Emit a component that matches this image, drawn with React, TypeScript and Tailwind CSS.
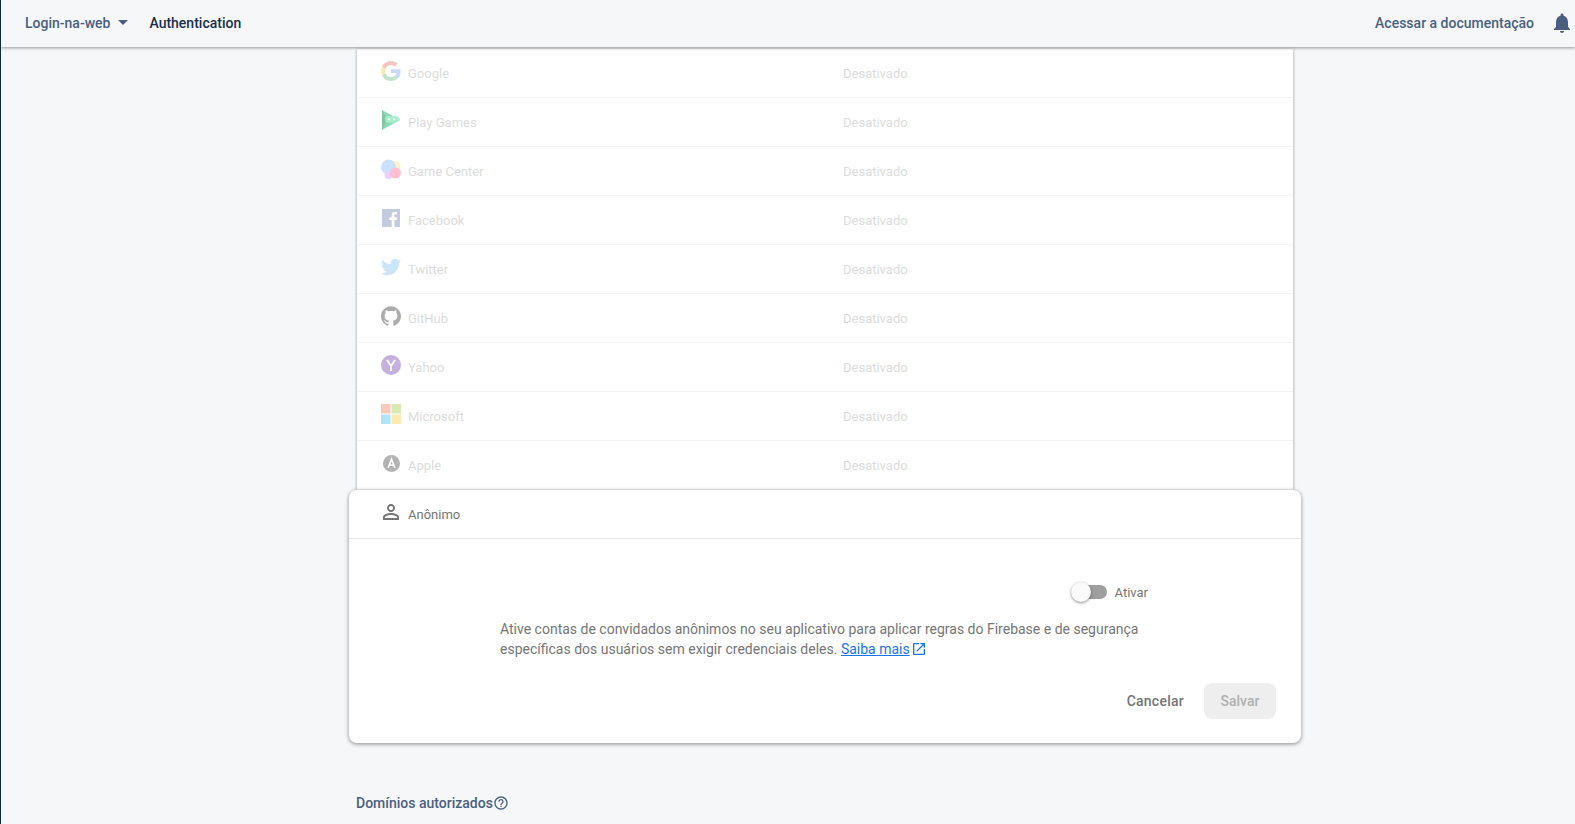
import type { ReactNode } from 'react'
import { SiGithub } from 'react-icons/si'

const font = { fontFamily: 'Roboto, sans-serif' }

function GoogleIcon() {
  return (
    <svg viewBox="0 0 48 48" className="h-5 w-5">
      <path fill="#EA4335" d="M24 9.5c3.54 0 6.71 1.22 9.21 3.6l6.85-6.85C35.9 2.38 30.47 0 24 0 14.62 0 6.51 5.38 2.56 13.22l7.98 6.19C12.43 13.72 17.74 9.5 24 9.5z" />
      <path fill="#4285F4" d="M46.98 24.55c0-1.57-.15-3.09-.38-4.55H24v9.02h12.94c-.58 2.96-2.26 5.48-4.78 7.18l7.73 6c4.51-4.18 7.09-10.36 7.09-17.65z" />
      <path fill="#FBBC05" d="M10.53 28.59c-.5-1.45-.78-2.99-.78-4.59s.27-3.14.78-4.59l-7.98-6.19C.92 16.46 0 20.12 0 24c0 3.88.92 7.54 2.56 10.78l7.97-6.19z" />
      <path fill="#34A853" d="M24 48c6.48 0 11.93-2.13 15.89-5.81l-7.73-6c-2.15 1.45-4.92 2.3-8.16 2.3-6.26 0-11.57-4.22-13.47-9.91l-7.98 6.19C6.51 42.62 14.62 48 24 48z" />
    </svg>
  )
}

function PlayIcon() {
  return (
    <svg viewBox="0 0 20 20" className="h-5 w-5">
      <path fill="#20b46a" d="M1 0l18 10L1 20z" />
      <path fill="#0f8f4f" d="M1 0l3 5.5v9L1 20z" />
      <path fill="#4fdc9a" d="M6.5 6h7c2.5 0 5 2 5.5 4l-6.5 3.6c-.8-.6-1-.9-1.6-.9H7.6C5.8 12.7 4.5 11.2 4.5 9 4.5 7.3 5.2 6 6.5 6z" />
      <circle cx="7.8" cy="9.2" r="1" fill="#fff" />
      <circle cx="13" cy="9.2" r="1" fill="#fff" />
    </svg>
  )
}

function GameCenterIcon() {
  return (
    <svg viewBox="0 0 20 20" className="h-5 w-5">
      <circle cx="14" cy="7" r="5.5" fill="#ffe36b" />
      <circle cx="7.5" cy="8" r="7.5" fill="#7db5ff" />
      <circle cx="7.5" cy="16" r="4" fill="#c58cf5" />
      <circle cx="14.5" cy="14" r="5.5" fill="#ff5f8f" />
    </svg>
  )
}

function FacebookIcon() {
  return (
    <svg viewBox="0 0 18 18" className="h-[18px] w-[18px]">
      <rect width="18" height="18" fill="#3b5998" />
      <path fill="#fff" d="M12.4 18v-7h2.3l.4-2.7h-2.7V6.6c0-.8.2-1.3 1.3-1.3h1.4V2.9c-.3 0-1.1-.1-2-.1-2 0-3.4 1.2-3.4 3.5v2H7.4V11h2.3v7z" />
    </svg>
  )
}

function TwitterIcon() {
  return (
    <svg viewBox="0 0 24 24" className="h-5 w-5">
      <path fill="#55acee" d="M23.953 4.57a10 10 0 01-2.825.775 4.958 4.958 0 002.163-2.723c-.951.555-2.005.959-3.127 1.184a4.92 4.92 0 00-8.384 4.482C7.69 8.095 4.067 6.13 1.64 3.162a4.822 4.822 0 00-.666 2.475c0 1.71.87 3.213 2.188 4.096a4.904 4.904 0 01-2.228-.616v.06a4.923 4.923 0 003.946 4.827 4.996 4.996 0 01-2.212.085 4.936 4.936 0 004.604 3.417 9.867 9.867 0 01-6.102 2.105c-.39 0-.779-.023-1.17-.067a13.995 13.995 0 007.557 2.209c9.053 0 13.998-7.496 13.998-13.985 0-.21 0-.42-.015-.63A9.935 9.935 0 0024 4.59z" />
    </svg>
  )
}

function YahooIcon() {
  return (
    <svg viewBox="0 0 20 20" className="h-5 w-5">
      <circle cx="10" cy="10" r="10" fill="#5f1fa8" />
      <path stroke="#fff" strokeWidth="2" fill="none" d="M6 5l4 6 4-6M10 11v5" />
    </svg>
  )
}

function MicrosoftIcon() {
  return (
    <svg viewBox="0 0 20 20" className="h-5 w-5">
      <rect width="9.5" height="9.5" fill="#f25022" />
      <rect x="10.5" width="9.5" height="9.5" fill="#7fba00" />
      <rect y="10.5" width="9.5" height="9.5" fill="#00a4ef" />
      <rect x="10.5" y="10.5" width="9.5" height="9.5" fill="#ffb900" />
    </svg>
  )
}

function AppleIcon() {
  return (
    <svg viewBox="0 0 18 18" className="h-[17px] w-[17px]">
      <circle cx="9" cy="9" r="9" fill="#444" />
      <path stroke="#fff" strokeWidth="1.8" fill="none" d="M5.5 13.5L9 4.5l3.5 9M6.7 10.8h4.6" />
    </svg>
  )
}

const providers: { name: string; icon: ReactNode; iconClass: string }[] = [
  { name: 'Google', icon: <GoogleIcon />, iconClass: 'opacity-30' },
  { name: 'Play Games', icon: <PlayIcon />, iconClass: 'opacity-50' },
  { name: 'Game Center', icon: <GameCenterIcon />, iconClass: 'opacity-40' },
  { name: 'Facebook', icon: <FacebookIcon />, iconClass: 'opacity-30' },
  { name: 'Twitter', icon: <TwitterIcon />, iconClass: 'opacity-30' },
  { name: 'GitHub', icon: <SiGithub className="h-5 w-5 text-[#333]" />, iconClass: 'opacity-40' },
  { name: 'Yahoo', icon: <YahooIcon />, iconClass: 'opacity-35' },
  { name: 'Microsoft', icon: <MicrosoftIcon />, iconClass: 'opacity-30' },
  { name: 'Apple', icon: <AppleIcon />, iconClass: 'opacity-40' },
]

function ProviderRow({ name, icon, iconClass }: { name: string; icon: ReactNode; iconClass: string }) {
  return (
    <div className="flex h-[49px] items-center border-b border-[#f3f3f3] pl-[24px] text-[13px] text-[#dcdcdc]">
      <div className={`mb-1 flex h-5 w-5 items-center justify-center ${iconClass}`}>{icon}</div>
      <span className="ml-[7px] w-[435px] pt-[2px]">{name}</span>
      <span className="pt-[2px]">Desativado</span>
    </div>
  )
}

export default function App() {
  return (
    <div className="flex h-[824px] flex-col overflow-hidden border-l border-[#12263f] bg-[#f6f7f9]" style={font}>
      <header className="relative z-10 flex h-[47px] shrink-0 items-center bg-[#f6f7f9] pb-0.5 pl-6 pr-px text-sm font-medium shadow-[0_1px_3px_rgba(0,0,0,0.4)]">
        <span className="text-[#4a5f80]">Login-na-web</span>
        <svg viewBox="0 0 10 5" className="ml-2 h-[5px] w-[10px]">
          <path fill="#4a5f80" d="M0 0h10L5 5z" />
        </svg>
        <span className="ml-[21px] text-[#1a2f4a]">Authentication</span>
        <span className="ml-auto text-[#4a5f80]">Acessar a documentação</span>
        <svg viewBox="0 0 24 24" className="ml-4 h-6 w-6">
          <path fill="#4a5f80" d="M12 22c1.1 0 2-.9 2-2h-4c0 1.1.89 2 2 2zm6-6v-5c0-3.07-1.64-5.64-4.5-6.32V4c0-.83-.67-1.5-1.5-1.5s-1.5.67-1.5 1.5v.68C7.63 5.36 6 7.92 6 11v5l-2 2v1h16v-1l-2-2z" />
        </svg>
      </header>

      <main className="ml-[356px] w-[936px]">
        <section className="mt-[2px] bg-white shadow-[0_1px_3px_rgba(0,0,0,0.4)]">
          {providers.map((p) => (
            <ProviderRow key={p.name} {...p} />
          ))}
        </section>

        <section className="relative -mx-2 rounded-lg bg-white shadow-[0_1px_4px_rgba(0,0,0,0.45)]">
          <div className="flex h-[49px] items-center border-b border-[#e8e8e8] pl-[30px] text-[13px] text-[#757575]">
            <svg viewBox="0 0 24 24" className="mb-1 h-6 w-6">
              <path fill="#757575" d="M12 5.9c1.16 0 2.1.94 2.1 2.1s-.94 2.1-2.1 2.1S9.9 9.16 9.9 8s.94-2.1 2.1-2.1m0 9c2.97 0 6.1 1.46 6.1 2.1v1.1H5.9V17c0-.64 3.13-2.1 6.1-2.1M12 4C9.79 4 8 5.79 8 8s1.79 4 4 4 4-1.79 4-4-1.79-4-4-4zm0 9c-2.67 0-8 1.34-8 4v3h16v-3c0-2.66-5.33-4-8-4z" />
            </svg>
            <span className="ml-[5px] pt-[2px]">Anônimo</span>
          </div>

          <div className="pl-[151px] pr-[25px] pb-6">
            <div className="w-[648px]">
              <div className="flex items-center justify-end pt-[42px] text-[13px] text-[#757575]">
                <div className="relative h-3.5 w-[34px] rounded-full bg-[#9e9e9e]">
                  <span className="absolute -left-0.5 -top-[3px] h-5 w-5 rounded-full bg-[#fafafa] shadow-[0_1px_3px_rgba(0,0,0,0.45)]" />
                </div>
                <span className="ml-2 pt-[2px]">Ativar</span>
              </div>
              <p className="mt-4 text-sm leading-5 text-[#757575]">
                Ative contas de convidados anônimos no seu aplicativo para aplicar regras do Firebase e de segurança específicas dos usuários sem exigir credenciais deles.{' '}
                <a className="text-[#1a73e8] underline">Saiba mais</a>
                <svg viewBox="0 0 24 24" className="ml-px inline-block h-4 w-4 align-[-3px]">
                  <path fill="#1a73e8" d="M19 19H5V5h7V3H5c-1.11 0-2 .9-2 2v14c0 1.1.89 2 2 2h14c1.1 0 2-.9 2-2v-7h-2v7zM14 3v2h3.59l-9.83 9.83 1.41 1.41L19 6.41V10h2V3h-7z" />
                </svg>
              </p>
            </div>
            <div className="mt-6 flex items-center justify-end text-sm font-medium">
              <button className="tracking-[0.25px] text-[#757575]">Cancelar</button>
              <button className="ml-5 h-9 w-[72px] rounded-lg bg-[#eeeeee] text-[#b0b0b0]">Salvar</button>
            </div>
          </div>
        </section>

        <div className="-ml-px mt-[50px] flex items-center text-sm font-medium text-[#4a5f80]">
          Domínios autorizados
          <svg viewBox="0 0 24 24" className="h-4 w-4">
            <path fill="#4a5f80" d="M11 18h2v-2h-2v2zm1-16C6.48 2 2 6.48 2 12s4.48 10 10 10 10-4.48 10-10S17.52 2 12 2zm0 18c-4.41 0-8-3.59-8-8s3.59-8 8-8 8 3.59 8 8-3.59 8-8 8zm0-14c-2.21 0-4 1.79-4 4h2c0-1.1.9-2 2-2s2 .9 2 2c0 2-3 1.75-3 5h2c0-2.25 3-2.5 3-5 0-2.21-1.79-4-4-4z" />
          </svg>
        </div>
      </main>
    </div>
  )
}
